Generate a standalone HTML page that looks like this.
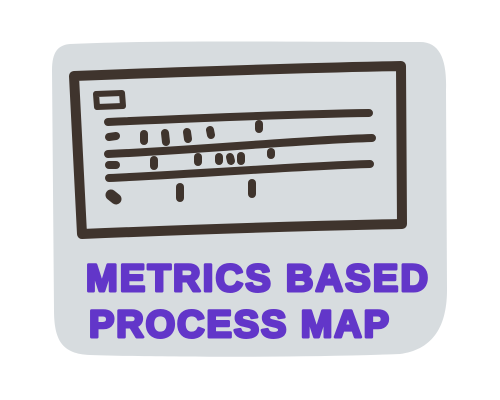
<!DOCTYPE html>
<html><head><style>
html,body{margin:0;padding:0;background:#fff;width:500px;height:400px;overflow:hidden}
</style></head><body>
<svg width="500" height="400" viewBox="0 0 500 400" xmlns="http://www.w3.org/2000/svg">
<path d="M70 44 C150 40 300 42 420 42 C440 42 447 60 446 90 L447 290 C447 330 430 350 400 354 C300 358 150 357 90 355 C62 354 54 340 54 310 L52 70 C52 52 58 45 70 44 Z" fill="#d7dcdf"/>
<g fill="none" stroke="#3f342d" stroke-linecap="round" stroke-linejoin="round">
<path d="M74 76 C180 72 300 68 401 66 L402 224 C300 226 180 230 82 234 Z" stroke-width="10"/>
<path d="M96 94 L122 93 L123 106 L97 107 Z" stroke-width="6"/>
<path d="M108 122 C200 118 300 114 369 113" stroke-width="8"/>
<path d="M108 154 C200 150 300 140 372 138" stroke-width="8"/>
<path d="M109 178 C200 174 300 166 370 164" stroke-width="8"/>
<g stroke-width="8">
<path d="M109 137 L116 136"/><path d="M144 134 L144 141"/><path d="M165 133 L166 142"/><path d="M187 132 L188 139"/><path d="M210 130 L211 135"/><path d="M259 124 L259 129"/>
<path d="M109 165 L116 165"/><path d="M154 160 L154 166"/><path d="M198 157 L198 162"/><path d="M219 157 L219 161"/><path d="M230 157 L231 161"/><path d="M241 156 L241 161"/><path d="M271 152 L271 155"/>
<path d="M180 187 L180 198"/><path d="M252 183 L252 194"/>
</g>
<path d="M111 195 L116 199" stroke-width="11"/>
</g>
<g font-family="Liberation Sans, sans-serif" font-weight="bold" font-size="38" fill="#6236c9" stroke="#6236c9" stroke-width="3" stroke-linejoin="round">
<text x="86" y="291" textLength="342" lengthAdjust="spacing">METRICS BASED</text>
<text x="89" y="337" textLength="300" lengthAdjust="spacing">PROCESS MAP</text>
</g>
</svg>
</body></html>
